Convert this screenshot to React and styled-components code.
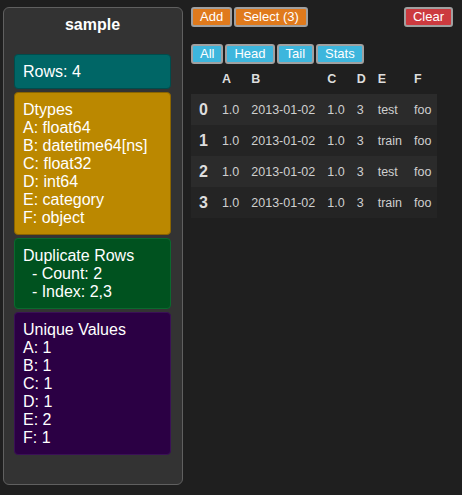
import React from 'react';
import styled, { createGlobalStyle } from 'styled-components';

const GlobalStyle = createGlobalStyle`
  html, body {
    margin: 0;
    padding: 0;
    background: #1f1f1f;
    font-family: 'Liberation Sans', Arial, sans-serif;
  }
`;

const Page = styled.div`
  display: flex;
  align-items: flex-start;
  gap: 8px;
  padding: 7px 9px 7px 3px;
  min-height: 481px;
`;

const Panel = styled.aside`
  width: 180px;
  box-sizing: border-box;
  background: #333333;
  border: 1px solid #606060;
  border-radius: 6px;
  padding: 8px 11px 29px 10px;
`;

const Title = styled.div`
  color: #ffffff;
  font-weight: bold;
  font-size: 16px;
  line-height: 18px;
  text-align: center;
  margin-bottom: 20px;
`;

const Cards = styled.div`
  display: flex;
  flex-direction: column;
  gap: 3px;
`;

const Card = styled.div`
  background: ${(p) => p.$bg};
  border: 1px solid ${(p) => p.$edge};
  border-radius: 4px;
  padding: 8px 8px 7px;
  color: #ffffff;
  font-size: 16px;
  line-height: 18px;
  white-space: pre;
`;

const Main = styled.main`
  flex: 1;
  display: flex;
  flex-direction: column;
`;

const Toolbar = styled.div`
  display: flex;
  gap: 2px;
  margin-bottom: ${(p) => p.$gap || 0}px;
`;

const Spacer = styled.div`
  flex: 1;
`;

const Button = styled.button`
  height: 20px;
  box-sizing: border-box;
  padding: 0 7px;
  border: 2px solid #a0a0a0;
  border-radius: 3px;
  background: ${(p) => p.$bg};
  color: #ffffff;
  font-family: 'Liberation Sans', Arial, sans-serif;
  font-size: 13px;
  line-height: 16px;
  cursor: pointer;
`;

const Table = styled.table`
  border-collapse: collapse;
  color: #cfcfcf;
  font-size: 12.5px;
  width: max-content;
`;

const Head = styled.th`
  height: 30px;
  padding: 0 6px;
  text-align: left;
  font-weight: bold;
  font-size: 12.5px;
  color: #dddddd;
`;

const Row = styled.tr`
  height: 31px;
  background: ${(p) => (p.$odd ? '#242424' : '#2b2b2b')};
`;

const Index = styled.th`
  padding: 0 8px;
  font-size: 16px;
  font-weight: bold;
  color: #dddddd;
  text-align: left;
`;

const Cell = styled.td`
  padding: 0 6px;
  text-align: left;
`;

const stats = [
  { bg: '#006666', edge: '#004c4c', text: 'Rows: 4' },
  {
    bg: '#bb8800',
    edge: '#8a6400',
    text: 'Dtypes\nA: float64\nB: datetime64[ns]\nC: float32\nD: int64\nE: category\nF: object',
  },
  { bg: '#00521f', edge: '#0a6a2e', text: 'Duplicate Rows\n  - Count: 2\n  - Index: 2,3' },
  { bg: '#2b0044', edge: '#3a1056', text: 'Unique Values\nA: 1\nB: 1\nC: 1\nD: 1\nE: 2\nF: 1' },
];

const columns = ['A', 'B', 'C', 'D', 'E', 'F'];
const rows = [
  ['1.0', '2013-01-02', '1.0', '3', 'test', 'foo'],
  ['1.0', '2013-01-02', '1.0', '3', 'train', 'foo'],
  ['1.0', '2013-01-02', '1.0', '3', 'test', 'foo'],
  ['1.0', '2013-01-02', '1.0', '3', 'train', 'foo'],
];

function App() {
  return (
    <Page>
      <GlobalStyle />
      <Panel>
        <Title>sample</Title>
        <Cards>
          {stats.map((s, i) => (
            <Card key={i} $bg={s.bg} $edge={s.edge}>
              {s.text}
            </Card>
          ))}
        </Cards>
      </Panel>
      <Main>
        <Toolbar $gap={17}>
          <Button $bg="#e07a1c">Add</Button>
          <Button $bg="#e07a1c">Select (3)</Button>
          <Spacer />
          <Button $bg="#cc3a3f">Clear</Button>
        </Toolbar>
        <Toolbar>
          <Button $bg="#3db6dd">All</Button>
          <Button $bg="#3db6dd">Head</Button>
          <Button $bg="#3db6dd">Tail</Button>
          <Button $bg="#3db6dd">Stats</Button>
        </Toolbar>
        <Table>
          <thead>
            <tr>
              <Head />
              {columns.map((c) => (
                <Head key={c}>{c}</Head>
              ))}
            </tr>
          </thead>
          <tbody>
            {rows.map((r, i) => (
              <Row key={i} $odd={i % 2 === 1}>
                <Index>{i}</Index>
                {r.map((v, j) => (
                  <Cell key={j}>{v}</Cell>
                ))}
              </Row>
            ))}
          </tbody>
        </Table>
      </Main>
    </Page>
  );
}

export default App;
